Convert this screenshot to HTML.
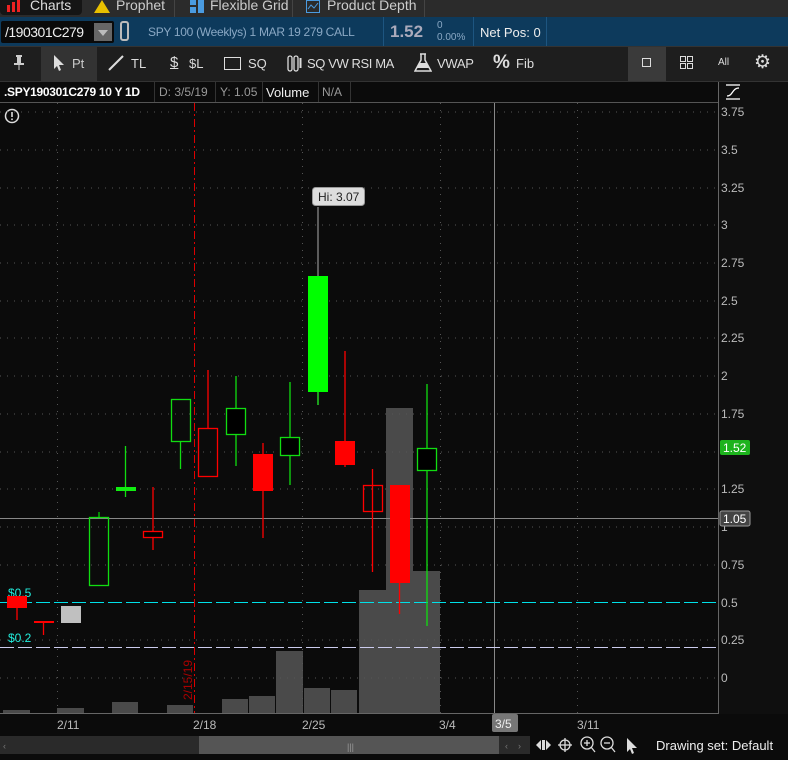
<!DOCTYPE html>
<html><head><meta charset="utf-8"><style>
*{margin:0;padding:0;box-sizing:border-box}
body{width:788px;height:760px;background:#0b0b0b;font-family:"Liberation Sans",sans-serif;color:#ddd;position:relative;overflow:hidden;font-size:12px}
.a{position:absolute;white-space:nowrap}
</style></head><body>
<div class="a" style="left:0;top:0;width:788px;height:17px;background:#2b2b2b"></div>
<div class="a" style="left:0;top:0;width:82px;height:15px;background:#151515;border-radius:0 0 4px 4px"></div>
<svg class="a" style="left:6px;top:0" width="18" height="12"><rect x="1" y="5" width="3" height="7" fill="#e22"/><rect x="6" y="2" width="3" height="10" fill="#e22"/><rect x="11" y="0" width="3" height="12" fill="#e22"/></svg>
<div class="a" style="left:30px;top:-3px;font-size:14px;color:#ddd">Charts</div>
<svg class="a" style="left:94px;top:0" width="16" height="13"><polygon points="8,0 16,13 0,13" fill="#e8c000"/></svg>
<div class="a" style="left:116px;top:-3px;font-size:14px;color:#ccc">Prophet</div>
<div class="a" style="left:174px;top:0;width:1px;height:17px;background:#444"></div>
<svg class="a" style="left:190px;top:0" width="14" height="13"><rect x="0" y="0" width="6" height="5" fill="#4a9be0"/><rect x="8" y="0" width="6" height="13" fill="#4a9be0"/><rect x="0" y="7" width="6" height="6" fill="#4a9be0"/></svg>
<div class="a" style="left:210px;top:-3px;font-size:14px;color:#ccc">Flexible Grid</div>
<div class="a" style="left:292px;top:0;width:1px;height:17px;background:#444"></div>
<svg class="a" style="left:306px;top:0" width="14" height="13"><rect x="0.5" y="0.5" width="13" height="12" fill="none" stroke="#4a9be0"/><polyline points="2,9 5,5 8,8 12,3" fill="none" stroke="#4a9be0"/></svg>
<div class="a" style="left:327px;top:-3px;font-size:14px;color:#ccc">Product Depth</div>
<div class="a" style="left:424px;top:0;width:1px;height:17px;background:#444"></div>
<div class="a" style="left:0;top:17px;width:788px;height:29px;background:#0d3a5c"></div>
<div class="a" style="left:1px;top:21px;width:113px;height:22px;background:#0a0a0a;border-radius:2px"></div>
<div class="a" style="left:5px;top:24px;font-size:14px;color:#eee;letter-spacing:-0.5px">/190301C279</div>
<div class="a" style="left:94px;top:23px;width:18px;height:18px;background:#666"></div>
<svg class="a" style="left:97px;top:29px" width="12" height="8"><polygon points="1,1 11,1 6,7" fill="#bbb"/></svg>
<div class="a" style="left:120px;top:21px;width:9px;height:20px;border:2px solid #bbb;border-radius:3px"></div>
<div class="a" style="left:148px;top:25px;font-size:12px;color:#8aa8c4;letter-spacing:-0.3px">SPY 100 (Weeklys) 1 MAR 19 279 CALL</div>
<div class="a" style="left:383px;top:17px;width:1px;height:29px;background:#1d5580"></div>
<div class="a" style="left:390px;top:22px;font-size:17px;font-weight:bold;color:#aab">1.52</div>
<div class="a" style="left:437px;top:20px;font-size:10px;color:#8aa8c4">0</div>
<div class="a" style="left:437px;top:32px;font-size:10px;color:#8aa8c4">0.00%</div>
<div class="a" style="left:473px;top:17px;width:1px;height:29px;background:#1d5580"></div>
<div class="a" style="left:480px;top:25px;font-size:13px;color:#eee">Net Pos: 0</div>
<div class="a" style="left:546px;top:17px;width:1px;height:29px;background:#1d5580"></div>
<div class="a" style="left:0;top:46px;width:788px;height:36px;background:#1e1e1e;border-top:1px solid #333"></div>
<div class="a" style="left:41px;top:47px;width:56px;height:34px;background:#333"></div>
<div class="a" style="left:628px;top:47px;width:38px;height:34px;background:#3a3a3a"></div>
<svg class="a" style="left:14px;top:55px" width="10" height="16"><rect x="2" y="0" width="6" height="2" fill="#ccc"/><rect x="3" y="2" width="4" height="6" fill="#ccc"/><rect x="0" y="8" width="10" height="2" fill="#ccc"/><rect x="4.5" y="10" width="1" height="5" fill="#ccc"/></svg>
<svg class="a" style="left:53px;top:55px" width="12" height="16"><polygon points="1,0 11,10 6,10 8,15 6,16 4,11 1,14" fill="#ddd"/></svg>
<div class="a" style="left:72px;top:56px;color:#ccc;font-size:13px">Pt</div>
<svg class="a" style="left:108px;top:55px" width="16" height="16"><line x1="1" y1="15" x2="15" y2="1" stroke="#ddd" stroke-width="2"/></svg>
<div class="a" style="left:131px;top:56px;color:#ddd;font-size:13px">TL</div>
<div class="a" style="left:170px;top:54px;color:#ddd;font-size:15px;text-decoration:underline">$</div>
<div class="a" style="left:189px;top:56px;color:#ddd;font-size:13px">$L</div>
<div class="a" style="left:224px;top:57px;width:17px;height:13px;border:1px solid #ddd"></div>
<div class="a" style="left:248px;top:56px;color:#ddd;font-size:13px">SQ</div>
<svg class="a" style="left:287px;top:55px" width="16" height="17"><rect x="1" y="1" width="4" height="15" rx="2" fill="none" stroke="#ddd" stroke-width="1.3"/><rect x="7" y="1" width="4" height="15" rx="2" fill="none" stroke="#ddd" stroke-width="1.3"/><rect x="12.5" y="3" width="2" height="10" fill="#ddd"/></svg>
<div class="a" style="left:307px;top:56px;color:#ddd;font-size:13px;letter-spacing:-0.4px">SQ VW RSI MA</div>
<svg class="a" style="left:414px;top:53px" width="18" height="20"><path d="M6 1h6M7 1v6L1 18h16L11 7V1" fill="none" stroke="#ddd" stroke-width="1.5"/><path d="M3 15L6 10h6l3 5z" fill="#ddd"/></svg>
<div class="a" style="left:437px;top:56px;color:#ddd;font-size:13px;letter-spacing:-0.3px">VWAP</div>
<div class="a" style="left:493px;top:52px;color:#ddd;font-size:19px;font-weight:bold">%</div>
<div class="a" style="left:516px;top:56px;color:#ddd;font-size:13px">Fib</div>
<div class="a" style="left:642px;top:58px;width:9px;height:9px;border:1px solid #ddd"></div>
<svg class="a" style="left:680px;top:56px" width="13" height="13"><g fill="none" stroke="#ddd"><rect x="0.5" y="0.5" width="5" height="5"/><rect x="7.5" y="0.5" width="5" height="5"/><rect x="0.5" y="7.5" width="5" height="5"/><rect x="7.5" y="7.5" width="5" height="5"/></g></svg>
<div class="a" style="left:718px;top:57px;color:#ddd;font-size:10px">All</div>
<div class="a" style="left:754px;top:51px;color:#ddd;font-size:19px">&#x2699;</div>
<div class="a" style="left:0;top:81px;width:788px;height:1px;background:#333"></div>
<div class="a" style="left:0;top:82px;width:718px;height:21px;background:#0b0b0b;border-bottom:1px solid #555"></div>
<div class="a" style="left:4px;top:85px;font-size:12px;font-weight:bold;color:#fff;letter-spacing:-0.3px">.SPY190301C279 10 Y 1D</div>
<div class="a" style="left:154px;top:82px;width:1px;height:20px;background:#333"></div>
<div class="a" style="left:159px;top:85px;color:#999">D: 3/5/19</div>
<div class="a" style="left:215px;top:82px;width:1px;height:20px;background:#333"></div>
<div class="a" style="left:220px;top:85px;color:#999">Y: 1.05</div>
<div class="a" style="left:262px;top:82px;width:1px;height:20px;background:#333"></div>
<div class="a" style="left:266px;top:85px;color:#eee;font-size:13px">Volume</div>
<div class="a" style="left:318px;top:82px;width:1px;height:20px;background:#333"></div>
<div class="a" style="left:322px;top:85px;color:#999">N/A</div>
<div class="a" style="left:350px;top:82px;width:1px;height:20px;background:#333"></div>
<svg class="a" style="left:0;top:0" width="788" height="760">
<rect x="718" y="82" width="70" height="632" fill="#0f0f0f"/>
<line x1="718.5" y1="82" x2="718.5" y2="714" stroke="#666"/>
<line x1="0" y1="713.5" x2="718" y2="713.5" stroke="#666"/>
<g stroke="#fff" stroke-width="1.3" fill="none"><line x1="726" y1="85" x2="740" y2="85"/><line x1="726" y1="99" x2="740" y2="99"/><path d="M727 96C733 96 732 88 739 88"/></g>
<circle cx="12" cy="116" r="6.5" fill="none" stroke="#ddd" stroke-width="1.5"/><rect x="11.2" y="112" width="1.6" height="5" fill="#ddd"/><rect x="11.2" y="118.5" width="1.6" height="1.6" fill="#ddd"/>
<g fill="#4a4a4a">
<rect x="3" y="710" width="27" height="3"/><rect x="57" y="708" width="27" height="5"/><rect x="112" y="702" width="26" height="11"/><rect x="167" y="705" width="26" height="8"/><rect x="222" y="699" width="26" height="14"/><rect x="249" y="696" width="26" height="17"/><rect x="276" y="651" width="27" height="62"/><rect x="304" y="688" width="26" height="25"/><rect x="331" y="690" width="26" height="23"/><rect x="359" y="590" width="27" height="123"/><rect x="386" y="408" width="27" height="305"/><rect x="413" y="571" width="27" height="142"/>
</g>
<g stroke="#555" stroke-dasharray="1,6">
<line x1="0" y1="112" x2="715" y2="112"/><line x1="0" y1="150" x2="715" y2="150"/><line x1="0" y1="188" x2="715" y2="188"/><line x1="0" y1="225" x2="715" y2="225"/><line x1="0" y1="263" x2="715" y2="263"/><line x1="0" y1="301" x2="715" y2="301"/><line x1="0" y1="338" x2="715" y2="338"/><line x1="0" y1="376" x2="715" y2="376"/><line x1="0" y1="414" x2="715" y2="414"/><line x1="0" y1="452" x2="715" y2="452"/><line x1="0" y1="489" x2="715" y2="489"/><line x1="0" y1="527" x2="715" y2="527"/><line x1="0" y1="565" x2="715" y2="565"/><line x1="0" y1="640" x2="715" y2="640"/><line x1="0" y1="678" x2="715" y2="678"/>
<line x1="57.5" y1="103" x2="57.5" y2="713"/><line x1="302.5" y1="103" x2="302.5" y2="713"/><line x1="440.5" y1="103" x2="440.5" y2="713"/><line x1="577.5" y1="103" x2="577.5" y2="713"/>
</g>
<g stroke="#888" stroke-width="1"><line x1="0" y1="518.5" x2="718" y2="518.5"/><line x1="494.5" y1="103" x2="494.5" y2="713"/></g>
<line x1="194.5" y1="103" x2="194.5" y2="713" stroke="#d00" stroke-dasharray="8,3,2,3"/>
<text transform="translate(192,700) rotate(-90)" fill="#a00" font-size="12" font-family="Liberation Sans">2/15/19</text>
<g stroke-dasharray="14,4"><line x1="0" y1="602.5" x2="718" y2="602.5" stroke="#00e0e8"/><line x1="0" y1="647.5" x2="718" y2="647.5" stroke="#cce"/></g>
<text x="8" y="597" fill="#2ed" font-size="12" font-family="Liberation Sans">$0.5</text>
<text x="8" y="642" fill="#2ed" font-size="12" font-family="Liberation Sans">$0.2</text>
<g stroke-width="1.3">
<line x1="17" y1="596" x2="17" y2="620" stroke="#f00"/><rect x="7" y="596" width="20" height="12" fill="#f00"/>
<line x1="43.5" y1="621" x2="43.5" y2="635" stroke="#f00"/><rect x="34" y="621" width="20" height="2" fill="#f00"/>
<rect x="61" y="606" width="20" height="17" fill="#c0c0c0"/>
<line x1="99" y1="512" x2="99" y2="517" stroke="#0c0"/><rect x="89.5" y="517.5" width="19" height="68" fill="none" stroke="#1d1"/>
<line x1="125.5" y1="446" x2="125.5" y2="497" stroke="#1d1"/><rect x="116" y="487" width="20" height="4" fill="#1e1"/>
<line x1="153" y1="487" x2="153" y2="550" stroke="#f00"/><rect x="143.5" y="531.5" width="19" height="6" fill="#000" stroke="#f00"/>
<line x1="180.5" y1="441" x2="180.5" y2="469" stroke="#1d1"/><rect x="171.5" y="399.5" width="19" height="42" fill="none" stroke="#1d1"/>
<line x1="208" y1="370" x2="208" y2="428" stroke="#f00"/><rect x="198.5" y="428.5" width="19" height="48" fill="none" stroke="#f00"/>
<line x1="236" y1="376" x2="236" y2="466" stroke="#1d1"/><rect x="226.5" y="408.5" width="19" height="26" fill="#000" stroke="#1d1"/>
<line x1="263" y1="443" x2="263" y2="538" stroke="#f00"/><rect x="253" y="454" width="20" height="37" fill="#f00"/>
<line x1="290" y1="382" x2="290" y2="485" stroke="#1d1"/><rect x="280.5" y="437.5" width="19" height="18" fill="#000" stroke="#1d1"/>
<line x1="318" y1="207" x2="318" y2="405" stroke="#888"/><line x1="318" y1="380" x2="318" y2="405" stroke="#1d1"/><rect x="308" y="276" width="20" height="116" fill="#0f0"/>
<line x1="345" y1="351" x2="345" y2="467" stroke="#f00"/><rect x="335" y="441" width="20" height="24" fill="#f00"/>
<line x1="372.5" y1="469" x2="372.5" y2="572" stroke="#f00"/><rect x="363.5" y="485.5" width="19" height="26" fill="none" stroke="#f00"/>
<line x1="399.5" y1="583" x2="399.5" y2="614" stroke="#f00"/><rect x="390" y="485" width="20" height="98" fill="#f00"/>
<line x1="427" y1="384" x2="427" y2="626" stroke="#1d1"/><rect x="417.5" y="448.5" width="19" height="22" fill="#000" stroke="#1d1"/>
</g>
<rect x="312.5" y="187.5" width="52" height="18" rx="3" fill="#ddd" stroke="#999"/>
<text x="318" y="201" fill="#222" font-size="12" font-family="Liberation Sans">Hi: 3.07</text>
<g fill="#bbb" font-size="12" font-family="Liberation Sans">
<text x="721" y="116">3.75</text><text x="721" y="154">3.5</text><text x="721" y="192">3.25</text><text x="721" y="229">3</text><text x="721" y="267">2.75</text><text x="721" y="305">2.5</text><text x="721" y="342">2.25</text><text x="721" y="380">2</text><text x="721" y="418">1.75</text><text x="721" y="493">1.25</text><text x="721" y="531">1</text><text x="721" y="569">0.75</text><text x="721" y="607">0.5</text><text x="721" y="644">0.25</text><text x="721" y="682">0</text>
</g>
<rect x="720" y="440" width="30" height="15" rx="2" fill="#1db31d"/><text x="723" y="452" fill="#fff" font-size="12" font-family="Liberation Sans">1.52</text>
<rect x="720" y="511" width="30" height="15" rx="2" fill="#444" stroke="#999"/><text x="723" y="523" fill="#fff" font-size="12" font-family="Liberation Sans">1.05</text>
<g fill="#bbb" font-size="12" font-family="Liberation Sans"><text x="57" y="729">2/11</text><text x="193" y="729">2/18</text><text x="302" y="729">2/25</text><text x="439" y="729">3/4</text><text x="577" y="729">3/11</text></g>
<rect x="492" y="714" width="26" height="18" rx="2" fill="#777"/><text x="495" y="728" fill="#eee" font-size="12" font-family="Liberation Sans">3/5</text>
<rect x="0" y="736" width="530" height="18" fill="#2a2a2a"/><rect x="199" y="736" width="300" height="18" fill="#555"/>
<text x="347" y="750" fill="#999" font-size="9">|||</text>
<text x="3" y="749" fill="#777" font-size="9">‹</text><text x="505" y="749" fill="#777" font-size="9">‹</text><text x="518" y="749" fill="#777" font-size="9">›</text>
<g fill="none" stroke="#ddd" stroke-width="1.3">
<circle cx="565" cy="745" r="5"/><line x1="565" y1="738" x2="565" y2="752"/><line x1="558" y1="745" x2="572" y2="745"/>
<circle cx="587" cy="743" r="6"/><line x1="591" y1="747" x2="595" y2="752"/><line x1="584" y1="743" x2="590" y2="743"/><line x1="587" y1="740" x2="587" y2="746"/>
<circle cx="607" cy="743" r="6"/><line x1="611" y1="747" x2="615" y2="752"/><line x1="604" y1="743" x2="610" y2="743"/>
</g>
<polygon points="536,745 541,740 541,750" fill="#ddd"/><polygon points="551,745 546,740 546,750" fill="#ddd"/><rect x="542" y="740" width="3" height="10" fill="#ddd"/>
<polygon points="627,738 637,748 632,748 634,753 632,754 630,749 627,752" fill="#ddd"/>
<text x="656" y="750" fill="#eee" font-size="13" font-family="Liberation Sans">Drawing set: Default</text>
</svg>
</body></html>
